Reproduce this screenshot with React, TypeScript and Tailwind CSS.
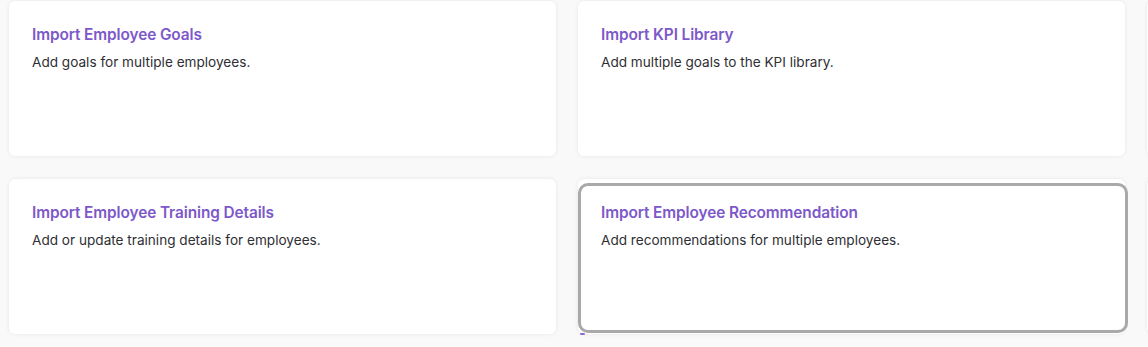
const cards = [
  { title: "Import Employee Goals", text: "Add goals for multiple employees." },
  { title: "Import KPI Library", text: "Add multiple goals to the KPI library." },
  { title: "", text: "" },
  { title: "Import Employee Training Details", text: "Add or update training details for employees." },
  { title: "Import Employee Recommendation", text: "Add recommendations for multiple employees.", focused: true },
  { title: "", text: "" },
];

export default function App() {
  return (
    <div className="h-[347px] w-[1148px] overflow-hidden bg-[#f9f9f9] font-['Inter',sans-serif]">
      <div className="grid w-max grid-cols-[repeat(3,547px)] gap-x-[22px] gap-y-[23px] pl-[9px] pt-px">
        {cards.map((card, i) => (
          <div
            key={i}
            className="relative h-[155px] rounded-md bg-white px-[23px] pt-[24px] shadow-[0_0_4px_rgba(0,0,0,0.08)]"
          >
            {card.title && (
              <>
                <h3 className="text-[15.4px] font-semibold leading-5 tracking-[-0.1px] text-[#7d58c9]">
                  {card.title}
                </h3>
                <p className="mt-[7px] text-[13.6px] leading-5 text-[#2e2e33]">{card.text}</p>
              </>
            )}
            {card.focused && (
              <>
                <div className="pointer-events-none absolute -right-[3px] bottom-px left-0 top-[4px] rounded-[10px] border-[3px] border-[#a9a9a9]" />
                <div className="absolute -bottom-[1px] left-[2px] h-[2px] w-[5px] rounded-full bg-[#8c6bd6]" />
              </>
            )}
          </div>
        ))}
      </div>
    </div>
  );
}
